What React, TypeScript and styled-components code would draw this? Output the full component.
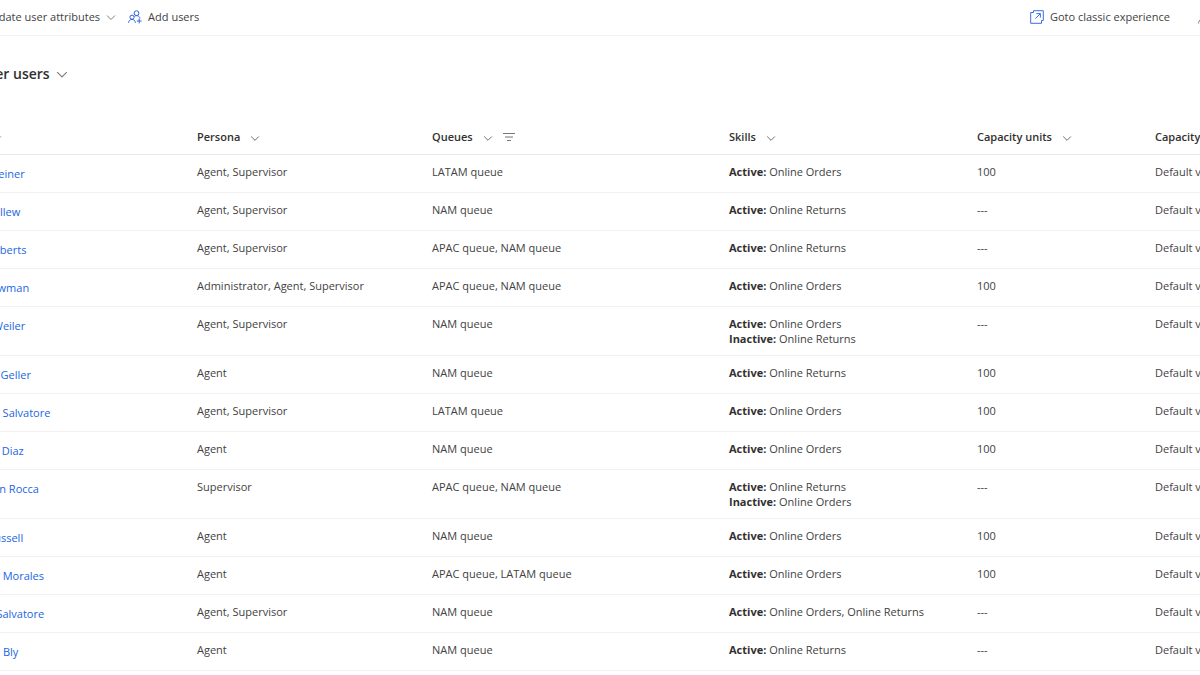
import React from "react";
import styled, { createGlobalStyle } from "styled-components";

const GlobalStyle = createGlobalStyle`
  *, *::before, *::after { box-sizing: border-box; }
  body {
    margin: 0;
    background: #ffffff;
    color: #424242;
    font-family: "Segoe UI", "Open Sans", "Noto Sans", sans-serif;
    font-size: 11px;
    line-height: 15px;
  }
`;

const Page = styled.div`
  width: 100%;
  min-height: 100vh;
  overflow: hidden;
`;

const Toolbar = styled.header`
  display: flex;
  justify-content: space-between;
  height: 36px;
  padding-bottom: 2px;
  margin: 0 -12px 0 -16px;
  border-bottom: 1px solid #f3f3f3;
`;

const ToolGroup = styled.div<{ $gap: number }>`
  display: flex;
  align-items: center;
  gap: ${(p) => p.$gap}px;
  white-space: nowrap;
`;

const ToolButton = styled.button`
  display: flex;
  align-items: center;
  gap: 6px;
  padding: 0;
  border: 0;
  background: none;
  color: inherit;
  font: inherit;
  white-space: nowrap;
`;

const TitleBar = styled.div`
  display: flex;
  height: 83px;
  padding-top: 29px;
  margin-left: -115px;
`;

const Title = styled.h1`
  margin: 0;
  font-size: 14px;
  line-height: 20px;
  font-weight: 600;
  color: #323130;
`;

const ViewButton = styled(ToolButton)`
  height: 18px;
`;

const Table = styled.table`
  width: max(1390px, 116%);
  margin-left: -50px;
  border-collapse: separate;
  border-spacing: 0;
  table-layout: fixed;
`;

const Column = styled.col<{ $width?: number }>`
  width: ${(p) => (p.$width ? `${p.$width}px` : "auto")};
`;

const HeadCell = styled.th`
  height: 36px;
  padding: 0;
  border-bottom: 1px solid #eaeaea;
  text-align: left;
  font-weight: 600;
  color: #323130;
`;

const HeadContent = styled.div`
  display: flex;
  align-items: center;
  gap: 10px;
`;

const Cell = styled.td`
  height: 38px;
  padding: 9px 0;
  border-bottom: 1px solid #f1f1f1;
  vertical-align: top;
  white-space: nowrap;
`;

const NameCell = styled(Cell)`
  padding: 11px 0 7px;
`;

const NameLink = styled.a`
  color: #2266e3;
  text-decoration: none;
`;

const Skill = styled.div`
  strong {
    font-weight: 700;
    color: #323130;
  }
`;

const Chevron = ({ size = 10 }: { size?: number }) => (
  <svg width={size} height={size} viewBox="0 0 10 10" fill="none" stroke="#808080" aria-hidden="true">
    <path d="M1 3.500 5 7.500 9 3.500" />
  </svg>
);

const SortChevron = () => (
  <svg width="10" height="10" viewBox="0 0 10 10" fill="none" stroke="#707070" aria-hidden="true">
    <path d="M1.200 4.500 5 8.300 8.800 4.500" />
  </svg>
);

const FilterIcon = () => (
  <svg width="12" height="10" viewBox="0 0 12 10" fill="none" stroke="#777777" aria-hidden="true">
    <path d="M0 1.500h12M2 5h8M4 8.500h4" />
  </svg>
);

const AddUsersIcon = () => (
  <svg width="14" height="14" viewBox="0 0 14 14" fill="none" stroke="#2f63d9" aria-hidden="true">
    <circle cx="8.5" cy="3.2" r="2.4" />
    <circle cx="4" cy="7.2" r="2.1" />
    <path d="M.6 12.8c0-2 1.5-3.4 3.4-3.4s3.3 1.4 3.3 3.4M6.4 6.4c1.8-1.4 5-.9 5.6 2M11.2 8.6v4.8M8.8 11h4.8" />
  </svg>
);

const PopOutIcon = () => (
  <svg width="14" height="14" viewBox="0 0 14 14" fill="none" stroke="#3d6fe0" aria-hidden="true">
    <path d="M3.5 2.5V.7h9.8v9.8h-1.8M3.5 2.5H.7v10.8h10.8v-2.8M5.4 8.6l4.8-4.8M6.4 3.6h4v4" />
  </svg>
);

const ProfileIcon = () => (
  <svg width="14" height="14" viewBox="0 0 14 14" fill="none" stroke="#777777" aria-hidden="true">
    <circle cx="7" cy="4" r="3" />
    <path d="M.6 13.5c0-3.5 3-5.500 6.400-5.500s6.400 2 6.400 5.500" />
  </svg>
);

type User = {
  name: string;
  persona: string;
  queues: string;
  active: string;
  inactive?: string;
  units: string;
};

const users: User[] = [
  { name: "Alanna Steiner", persona: "Agent, Supervisor", queues: "LATAM queue", active: "Online Orders", units: "100" },
  { name: "Allison Bellew", persona: "Agent, Supervisor", queues: "NAM queue", active: "Online Returns", units: "---" },
  { name: "Andrea Alberts", persona: "Agent, Supervisor", queues: "APAC queue, NAM queue", active: "Online Returns", units: "---" },
  { name: "Anton Bowman", persona: "Administrator, Agent, Supervisor", queues: "APAC queue, NAM queue", active: "Online Orders", units: "100" },
  { name: "Antonia Weiler", persona: "Agent, Supervisor", queues: "NAM queue", active: "Online Orders", inactive: "Online Returns", units: "---" },
  { name: "Charlotte Geller", persona: "Agent", queues: "NAM queue", active: "Online Returns", units: "100" },
  { name: "Katharina Salvatore", persona: "Agent, Supervisor", queues: "LATAM queue", active: "Online Orders", units: "100" },
  { name: "Alejandra Diaz", persona: "Agent", queues: "NAM queue", active: "Online Orders", units: "100" },
  { name: "Harrington Rocca", persona: "Supervisor", queues: "APAC queue, NAM queue", active: "Online Returns", inactive: "Online Orders", units: "---" },
  { name: "Steven Russell", persona: "Agent", queues: "NAM queue", active: "Online Orders", units: "100" },
  { name: "Sebastian Morales", persona: "Agent", queues: "APAC queue, LATAM queue", active: "Online Orders", units: "100" },
  { name: "Eduardo Salvatore", persona: "Agent, Supervisor", queues: "NAM queue", active: "Online Orders, Online Returns", units: "---" },
  { name: "Catherine Bly", persona: "Agent", queues: "NAM queue", active: "Online Returns", units: "---" },
];

const columns = [
  { label: "Name", width: 247 },
  { label: "Persona", width: 235 },
  { label: "Queues", width: 297, filter: true },
  { label: "Skills", width: 248 },
  { label: "Capacity units", width: 178 },
  { label: "Capacity profiles" },
];

export default function App() {
  return (
    <Page>
      <GlobalStyle />
      <Toolbar>
        <ToolGroup $gap={12}>
          <ToolButton type="button">
            Update user attributes
            <Chevron />
          </ToolButton>
          <ToolButton type="button">
            <AddUsersIcon />
            Add users
          </ToolButton>
        </ToolGroup>
        <ToolGroup $gap={28}>
          <ToolButton type="button">
            <PopOutIcon />
            Goto classic experience
          </ToolButton>
          <ToolButton type="button" aria-label="Profile">
            <ProfileIcon />
          </ToolButton>
        </ToolGroup>
      </Toolbar>
      <TitleBar>
        <Title>
          <ViewButton type="button">
            Omnichannel user users
            <Chevron size={12} />
          </ViewButton>
        </Title>
      </TitleBar>
      <Table>
        <colgroup>
          {columns.map((c) => (
            <Column key={c.label} $width={c.width} />
          ))}
        </colgroup>
        <thead>
          <tr>
            {columns.map((c) => (
              <HeadCell key={c.label} scope="col">
                <HeadContent>
                  {c.label}
                  <SortChevron />
                  {c.filter && <FilterIcon />}
                </HeadContent>
              </HeadCell>
            ))}
          </tr>
        </thead>
        <tbody>
          {users.map((u) => (
            <tr key={u.name}>
              <NameCell>
                <NameLink href="#">{u.name}</NameLink>
              </NameCell>
              <Cell>{u.persona}</Cell>
              <Cell>{u.queues}</Cell>
              <Cell>
                <Skill>
                  <strong>Active:</strong> {u.active}
                </Skill>
                {u.inactive && (
                  <Skill>
                    <strong>Inactive:</strong> {u.inactive}
                  </Skill>
                )}
              </Cell>
              <Cell>{u.units}</Cell>
              <Cell>Default voice</Cell>
            </tr>
          ))}
        </tbody>
      </Table>
    </Page>
  );
}
